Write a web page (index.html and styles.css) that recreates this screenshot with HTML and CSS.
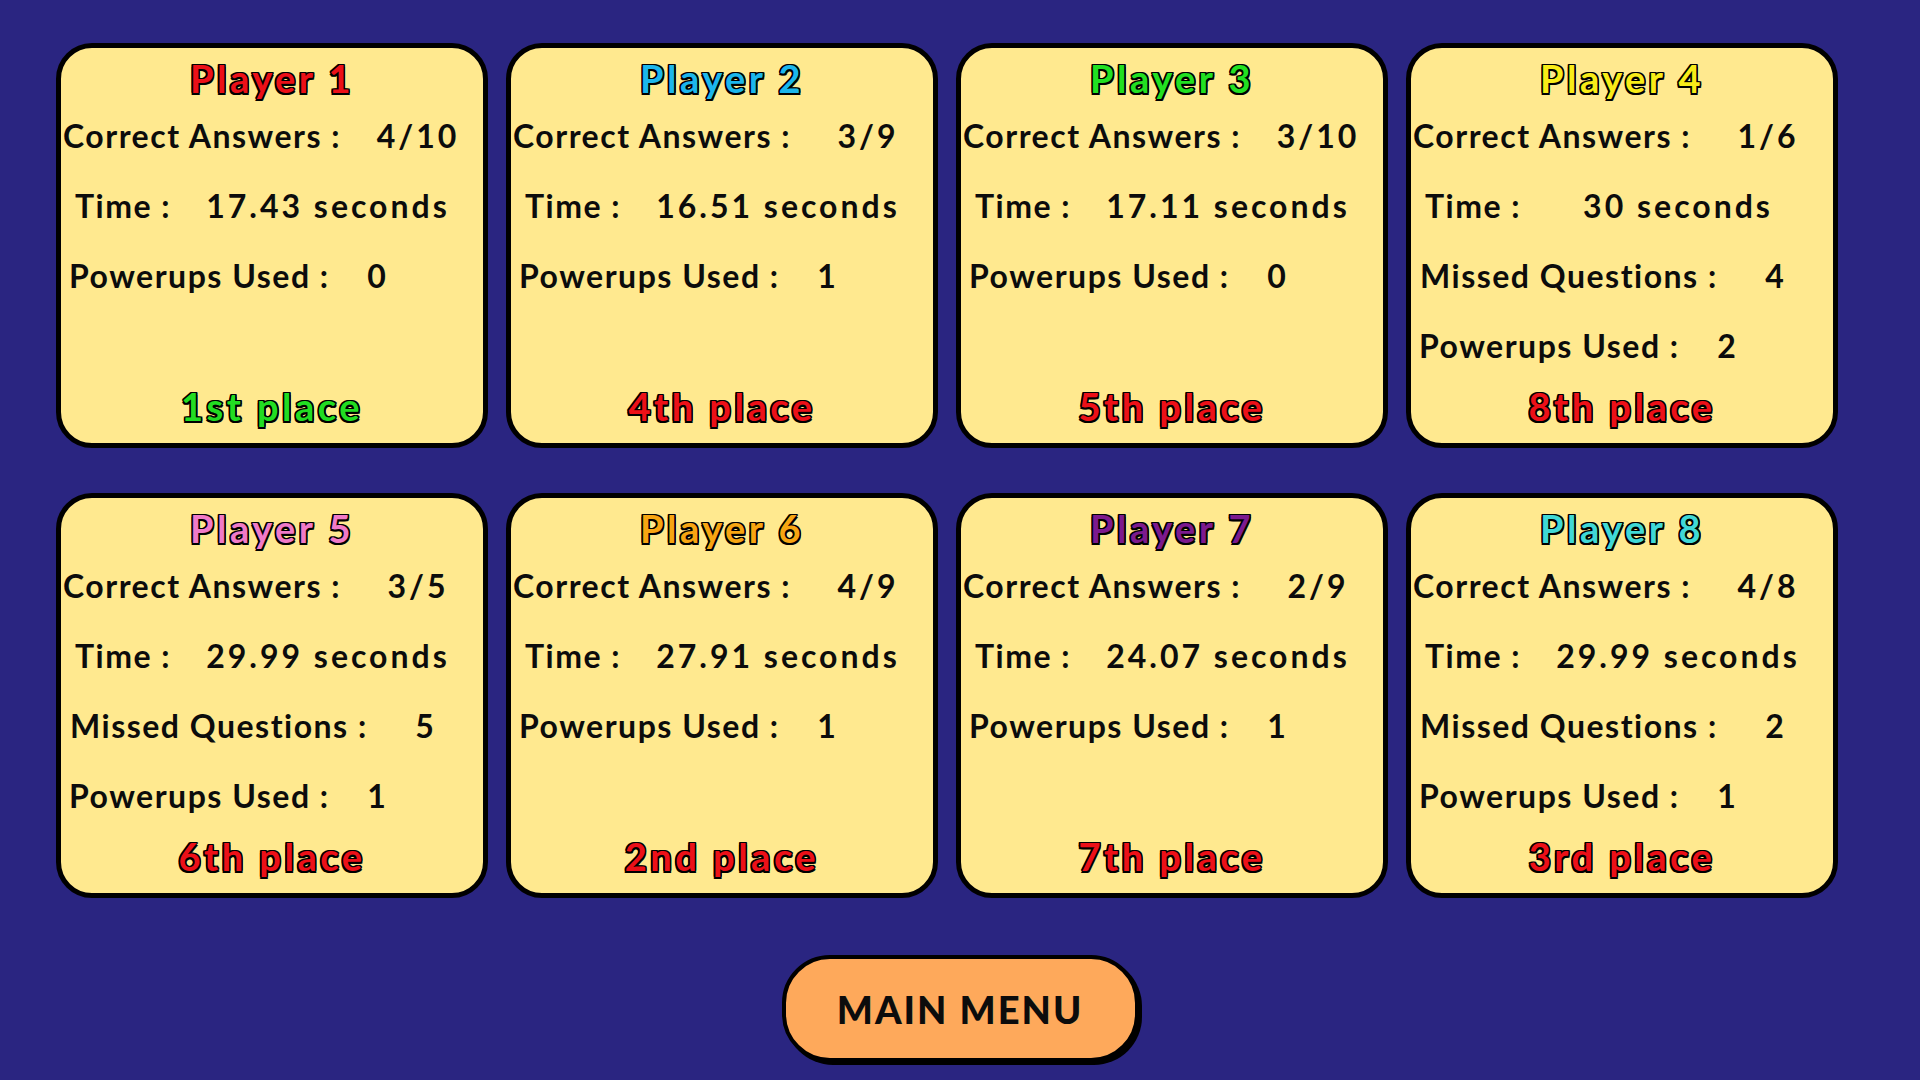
FILE: index.html
```html
<!DOCTYPE html>
<html lang="en">
<head>
  <meta charset="UTF-8" />
  <meta name="viewport" content="width=device-width, initial-scale=1.0" />
  <title>Results</title>
  <link rel="stylesheet" href="styles.css">
</head>
<body>
  <div class="board">
    <div class="card">
      <div class="title p1">Player 1</div>
      <div class="stat correct"><span>Correct Answers :</span><span class="val">4/10</span></div>
      <div class="stat time"><span>Time :</span><span class="val">17.43 seconds</span></div>
      <div class="stat powerups"><span>Powerups Used :</span><span class="val">0</span></div>
      <div class="place win">1st place</div>
    </div>
    <div class="card">
      <div class="title p2">Player 2</div>
      <div class="stat correct"><span>Correct Answers :</span><span class="val">3/9</span></div>
      <div class="stat time"><span>Time :</span><span class="val">16.51 seconds</span></div>
      <div class="stat powerups"><span>Powerups Used :</span><span class="val">1</span></div>
      <div class="place">4th place</div>
    </div>
    <div class="card">
      <div class="title p3">Player 3</div>
      <div class="stat correct"><span>Correct Answers :</span><span class="val">3/10</span></div>
      <div class="stat time"><span>Time :</span><span class="val">17.11 seconds</span></div>
      <div class="stat powerups"><span>Powerups Used :</span><span class="val">0</span></div>
      <div class="place">5th place</div>
    </div>
    <div class="card">
      <div class="title p4">Player 4</div>
      <div class="stat correct"><span>Correct Answers :</span><span class="val">1/6</span></div>
      <div class="stat time"><span>Time :</span><span class="val">30 seconds</span></div>
      <div class="stat missed"><span>Missed Questions :</span><span class="val">4</span></div>
      <div class="stat powerups"><span>Powerups Used :</span><span class="val">2</span></div>
      <div class="place">8th place</div>
    </div>
    <div class="card">
      <div class="title p5">Player 5</div>
      <div class="stat correct"><span>Correct Answers :</span><span class="val">3/5</span></div>
      <div class="stat time"><span>Time :</span><span class="val">29.99 seconds</span></div>
      <div class="stat missed"><span>Missed Questions :</span><span class="val">5</span></div>
      <div class="stat powerups"><span>Powerups Used :</span><span class="val">1</span></div>
      <div class="place">6th place</div>
    </div>
    <div class="card">
      <div class="title p6">Player 6</div>
      <div class="stat correct"><span>Correct Answers :</span><span class="val">4/9</span></div>
      <div class="stat time"><span>Time :</span><span class="val">27.91 seconds</span></div>
      <div class="stat powerups"><span>Powerups Used :</span><span class="val">1</span></div>
      <div class="place">2nd place</div>
    </div>
    <div class="card">
      <div class="title p7">Player 7</div>
      <div class="stat correct"><span>Correct Answers :</span><span class="val">2/9</span></div>
      <div class="stat time"><span>Time :</span><span class="val">24.07 seconds</span></div>
      <div class="stat powerups"><span>Powerups Used :</span><span class="val">1</span></div>
      <div class="place">7th place</div>
    </div>
    <div class="card">
      <div class="title p8">Player 8</div>
      <div class="stat correct"><span>Correct Answers :</span><span class="val">4/8</span></div>
      <div class="stat time"><span>Time :</span><span class="val">29.99 seconds</span></div>
      <div class="stat missed"><span>Missed Questions :</span><span class="val">2</span></div>
      <div class="stat powerups"><span>Powerups Used :</span><span class="val">1</span></div>
      <div class="place">3rd place</div>
    </div>
  </div>
  <div class="menu-row">
    <button class="menu-btn">MAIN MENU</button>
  </div>
</body>
</html>
```

FILE: styles.css
```css
body {
  margin: 0;
  width: 1920px;
  height: 1080px;
  background-color: #2a2581;
  font-family: 'Lato', 'Noto Sans', sans-serif;
  font-weight: bold;
  overflow: hidden;
}

.board {
  display: grid;
  grid-template-columns: repeat(4, 432px);
  grid-auto-rows: 405px;
  column-gap: 18px;
  row-gap: 45px;
  padding: 43px 0 0 56px;
}

.card {
  display: flex;
  flex-direction: column;
  background-color: #ffe98f;
  border: 5px solid #000;
  border-radius: 36px;
  padding: 7px 0 13px 0;
  box-sizing: border-box;
}

.title {
  font-size: 38px;
  line-height: 46px;
  text-align: center;
  letter-spacing: 3.5px;
  text-shadow: -1.5px -1.5px 0 #000, 1.5px -1.5px 0 #000, -1.5px 1.5px 0 #000, 1.5px 1.5px 0 #000,
    0 -1.5px 0 #000, 0 1.5px 0 #000, -1.5px 0 0 #000, 1.5px 0 0 #000;
}
.p1 { color: #ec1018; }
.p2 { color: #1cb6ec; }
.p3 { color: #22e022; }
.p4 { color: #f8ec18; }
.p5 { color: #f07ac8; }
.p6 { color: #f7a512; }
.p7 { color: #7c1a8e; }
.p8 { color: #40d8d6; }

.stat {
  display: grid;
  height: 70px;
  line-height: 70px;
  font-size: 32px;
  letter-spacing: 1.5px;
  color: #0c0c0c;
  white-space: nowrap;
}
.stat .val {
  text-align: center;
  letter-spacing: 3px;
}
.correct {
  grid-template-columns: 295px 120px;
  padding-left: 2px;
}
.time {
  grid-template-columns: 103px 300px;
  padding-left: 14px;
}
.missed {
  grid-template-columns: 306px 100px;
  padding-left: 9px;
}
.powerups {
  grid-template-columns: 264px 90px;
  padding-left: 8px;
}

.place {
  margin-top: auto;
  font-size: 38px;
  line-height: 48px;
  text-align: center;
  letter-spacing: 3.5px;
  color: #ec1018;
  text-shadow: -1.5px -1.5px 0 #000, 1.5px -1.5px 0 #000, -1.5px 1.5px 0 #000, 1.5px 1.5px 0 #000,
    0 -1.5px 0 #000, 0 1.5px 0 #000, -1.5px 0 0 #000, 1.5px 0 0 #000;
}
.place.win { color: #22dd22; }

.menu-row {
  display: flex;
  justify-content: center;
  padding-top: 57px;
}
.menu-btn {
  width: 357px;
  height: 107px;
  background-color: #fea95b;
  border: 4px solid #000;
  border-radius: 48px;
  box-shadow: 3px 3px 0 #000;
  font-family: 'Lato', 'Noto Sans', sans-serif;
  font-weight: 900;
  font-size: 38px;
  letter-spacing: 2px;
  color: #0c0c0c;
  cursor: pointer;
}
```
